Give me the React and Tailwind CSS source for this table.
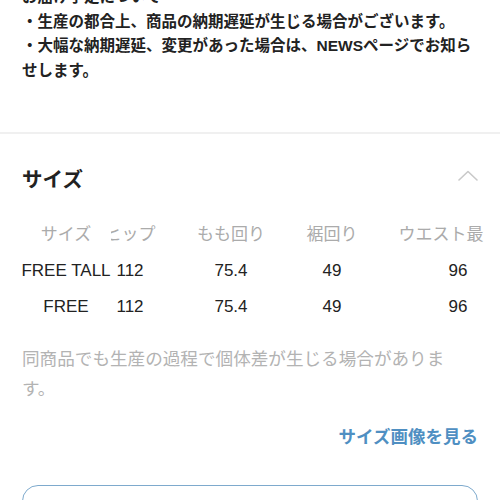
import React from 'react';

const SANS = "font-['Liberation_Sans','Noto_Sans_CJK_JP',sans-serif]";

const NOTES = [
  '・生産の都合上、商品の納期遅延が生じる場合がございます。',
  '・大幅な納期遅延、変更があった場合は、NEWSページでお知らせします。',
];

const COLUMNS = ['サイズ', 'ヒップ', 'もも回り', '裾回り', 'ウエスト最大幅'];

const ROWS = [
  ['FREE TALL', '112', '75.4', '49', '96'],
  ['FREE', '112', '75.4', '49', '96'],
];

function Cell({ children, first, className }) {
  return (
    <div
      className={
        'flex h-[36px] items-center justify-center whitespace-nowrap ' +
        (first ? 'relative z-10 bg-white ' : '') +
        className
      }
    >
      {children}
    </div>
  );
}

function SizeTable() {
  // scrolls sideways on the real page; the last header runs past the edge
  return (
    <div className="mt-[23px] mr-[16px] overflow-hidden pl-[21px]">
      <div className="grid w-max grid-cols-[90px_38px_164px_38px_214px] text-[17px]">
        {COLUMNS.map((c, i) => (
          <Cell key={c} first={i === 0} className="text-[#ababab]">
            {c}
          </Cell>
        ))}
        {ROWS.map((row, r) =>
          row.map((v, i) => (
            <Cell key={r + '-' + i} first={i === 0} className="text-[#222]">
              {v}
            </Cell>
          ))
        )}
      </div>
    </div>
  );
}

export default function App() {
  return (
    <div className={`h-[500px] w-[500px] overflow-hidden bg-white ${SANS}`}>
      <div className="mt-[-15px] px-[22px] text-[15.5px] font-semibold leading-[24.5px] text-[#222]">
        <p className="font-bold">お届け予定について</p>
        {NOTES.map((n) => (
          <p key={n}>{n}</p>
        ))}
      </div>

      <div className="mt-[49px] h-[2px] bg-[#f0f0f0]" />

      <div className="flex items-center justify-between px-[22px] pt-[32px]">
        <h2 className="text-[20.5px] font-bold leading-[28px] text-[#222]">サイズ</h2>
        <svg width="20" height="11" viewBox="0 0 20 11" className="mb-[9px]" fill="none">
          <path d="M1 10 L10 1.5 L19 10" stroke="#c9c9c9" strokeWidth="1.6" strokeLinecap="round" strokeLinejoin="round" />
        </svg>
      </div>

      <SizeTable />

      <p className="mt-[19px] w-[470px] px-[22px] text-[17.6px] leading-[30px] text-[#b3b3b3]">
        同商品でも生産の過程で個体差が生じる場合があります。
      </p>

      <div className="mt-[19px] flex justify-end px-[22px]">
        <a className="text-[17.5px] font-bold leading-[28px] text-[#4f8fc2]">サイズ画像を見る</a>
      </div>

      <div className="mx-[22px] mt-[34px] h-[60px] rounded-[16px] border-[1.5px] border-[#7eaacd]" />
    </div>
  );
}
